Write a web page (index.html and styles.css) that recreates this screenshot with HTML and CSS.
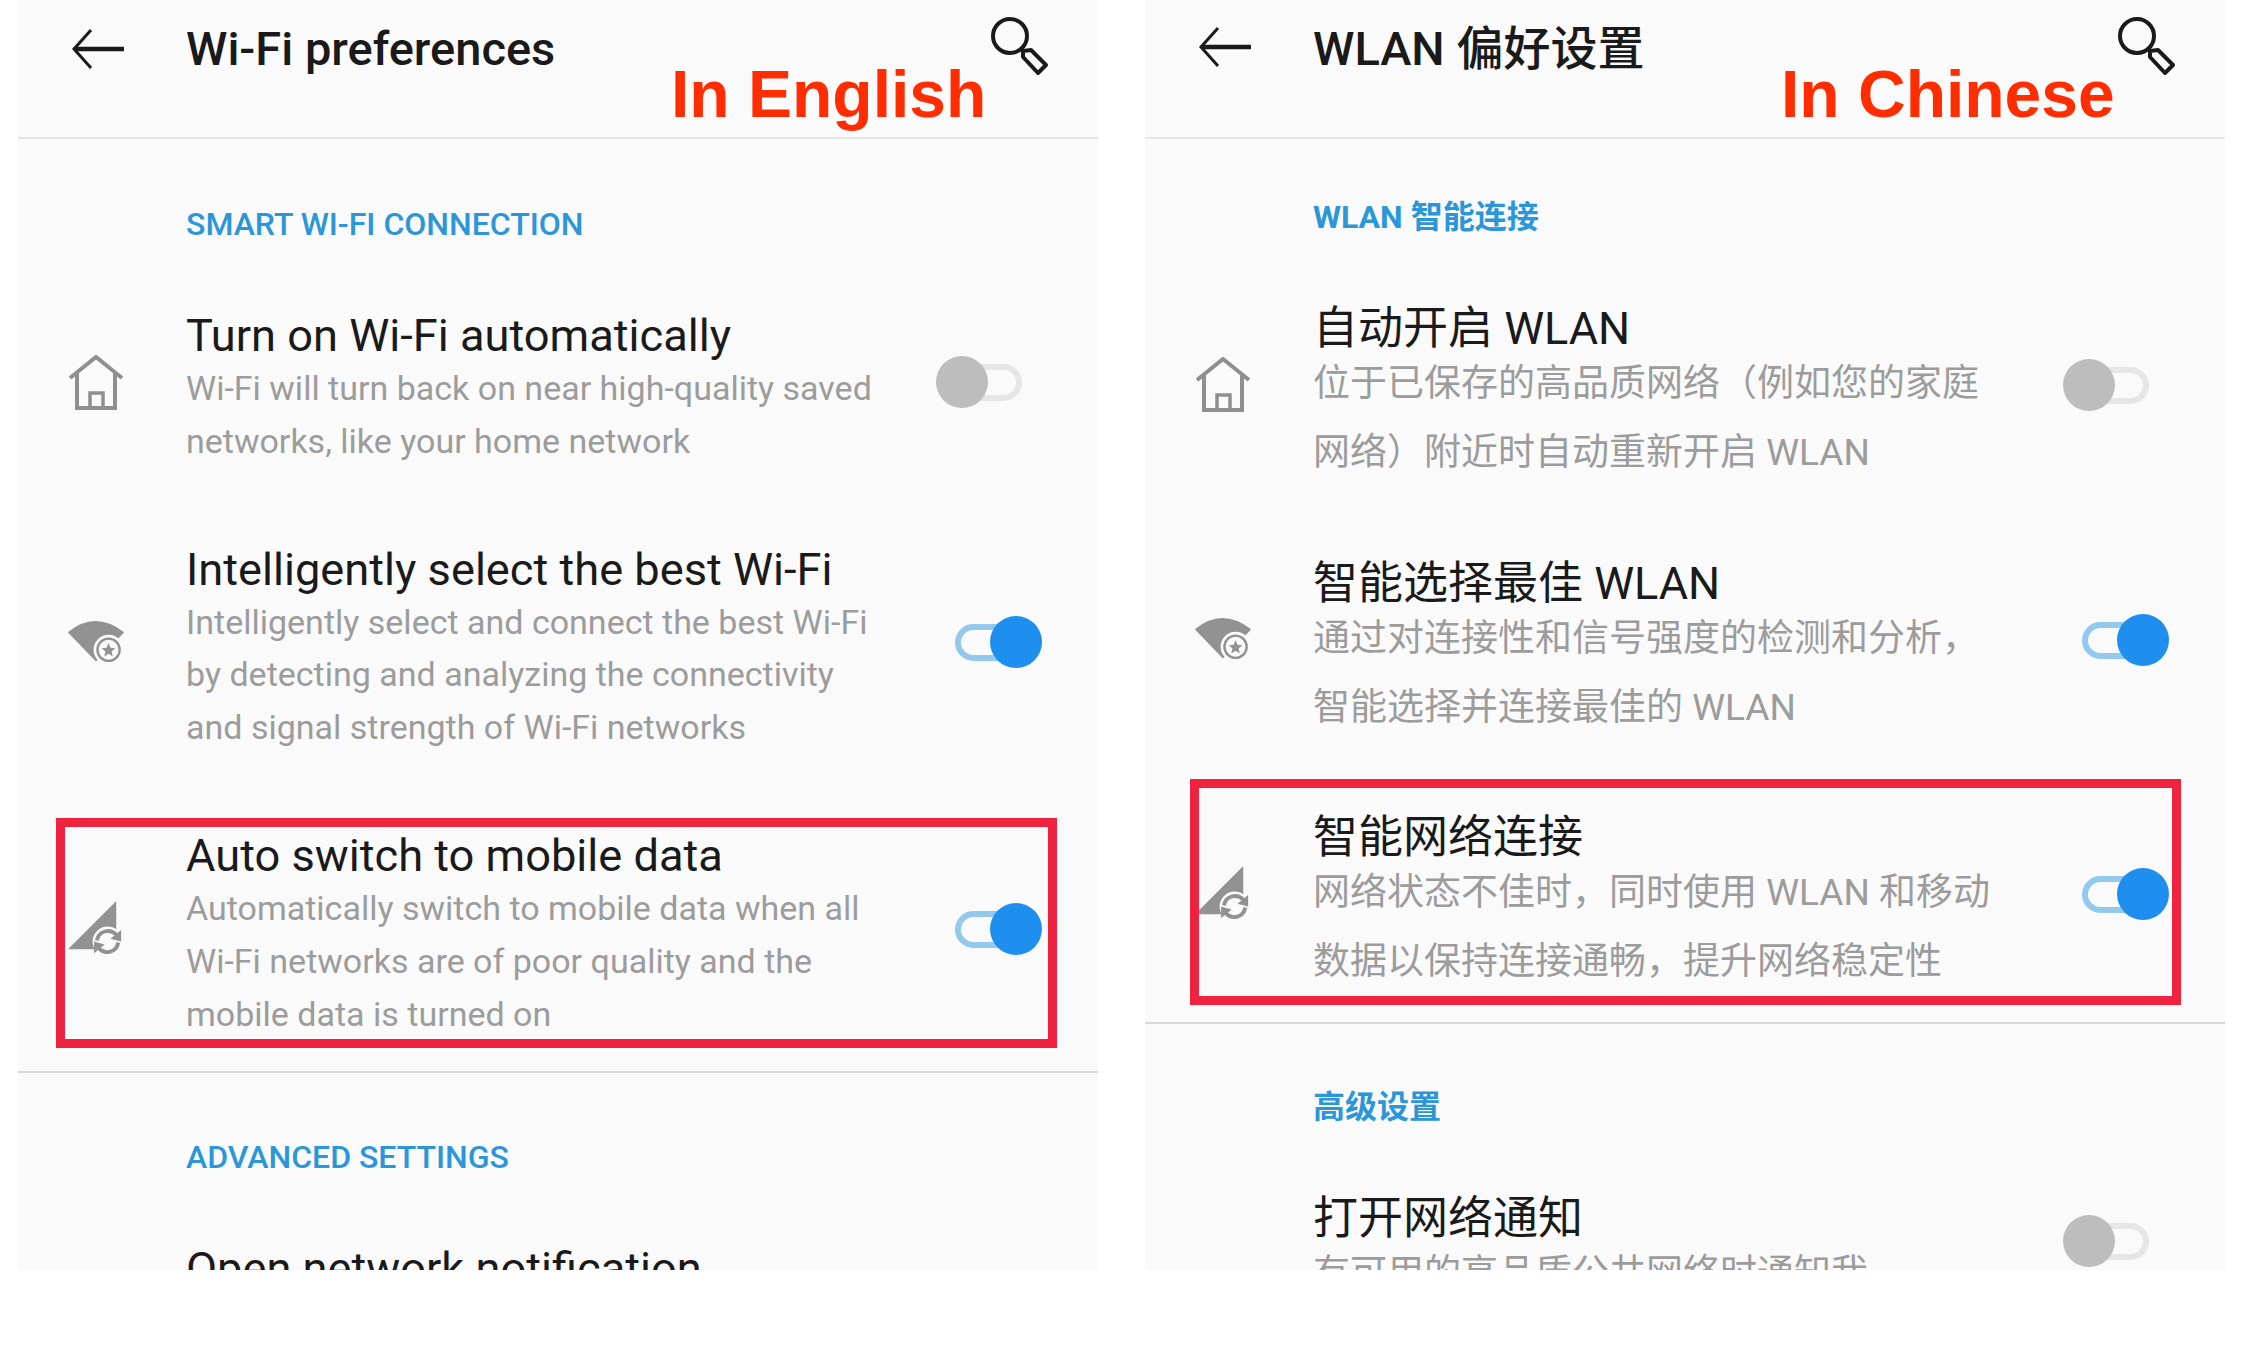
FILE: index.html
```html
<!DOCTYPE html>
<html lang="en">

<head>
    <meta charset="UTF-8">
    <title>Wi-Fi preferences</title>
    <link rel="stylesheet" href="styles.css">
</head>

<body>
    <svg class="sprite" aria-hidden="true">
        <symbol id="icon-back" viewBox="0 0 52 40">
            <path d="M19 1 L2 20 L19 39" fill="none" stroke="#1a1a1a" stroke-width="3" />
            <path d="M3 20 H52" fill="none" stroke="#1a1a1a" stroke-width="4.5" />
        </symbol>
        <symbol id="icon-search" viewBox="0 0 60 60">
            <circle cx="20" cy="20" r="17" fill="none" stroke="#1a1a1a" stroke-width="4" />
            <path d="M33 35 L41 34 L56 49 L48 57 L33 41 Z" fill="none" stroke="#1a1a1a" stroke-width="4" stroke-linejoin="round" />
        </symbol>
        <symbol id="icon-home" viewBox="0 0 56 56">
            <path d="M2 23 L28 2 L54 23" fill="none" stroke="#8f8f8f" stroke-width="4" />
            <path d="M9 18 V53 H47 V18" fill="none" stroke="#8f8f8f" stroke-width="4" />
            <path d="M22 53 V38 H35 V53" fill="none" stroke="#8f8f8f" stroke-width="3.5" />
        </symbol>
        <symbol id="icon-eye" viewBox="0 0 58 46">
            <path d="M1 12 Q28 -10 57 12 L29 41 Z" fill="#929292" stroke="#929292" stroke-width="1.5" stroke-linejoin="round" />
            <circle cx="42" cy="30" r="15.5" fill="#fafafa" />
            <circle cx="42" cy="30" r="11.5" fill="none" stroke="#929292" stroke-width="2.5" />
            <polygon points="42,23 44,28 49,28.500 45.200,31.800 46.400,37 42,34.200 37.600,37 38.800,31.800 35,28.500 40,28" fill="#929292" />
        </symbol>
        <symbol id="icon-signal" viewBox="0 0 58 58">
            <polygon points="50,0 50,50 0,50" fill="#929292" />
            <circle cx="41" cy="42" r="15.500" fill="#fafafa" />
            <path d="M30 41 A11.500 11.500 0 0 1 50 35" fill="none" stroke="#929292" stroke-width="4" />
            <polygon points="55,30 55,42 44,39" fill="#929292" />
            <path d="M52 43 A11.500 11.500 0 0 1 32 49" fill="none" stroke="#929292" stroke-width="4" />
            <polygon points="27,54 27,42 38,45" fill="#929292" />
        </symbol>
    </svg>

    <main class="page">
        <!-- English screen -->
        <section class="panel panel-en">
            <header class="app-bar">
                <svg class="back-icon"><use href="#icon-back" /></svg>
                <h1 class="app-title">Wi-Fi preferences</h1>
                <svg class="search-icon"><use href="#icon-search" /></svg>
            </header>
            <div class="group">
                <h2 class="group-label">SMART WI-FI CONNECTION</h2>
                <div class="rows">
                    <div class="row">
                        <svg class="row-icon"><use href="#icon-home" /></svg>
                        <div class="row-text">
                            <div class="row-title">Turn on Wi-Fi automatically</div>
                            <div class="row-desc">Wi-Fi will turn back on near high-quality saved<br>networks, like your home network</div>
                        </div>
                        <div class="toggle"><span class="track"></span><span class="knob"></span></div>
                    </div>
                    <div class="row">
                        <svg class="row-icon"><use href="#icon-eye" /></svg>
                        <div class="row-text">
                            <div class="row-title">Intelligently select the best Wi-Fi</div>
                            <div class="row-desc">Intelligently select and connect the best Wi-Fi<br>by detecting and analyzing the connectivity<br>and signal strength of Wi-Fi networks</div>
                        </div>
                        <div class="toggle on"><span class="track"></span><span class="knob"></span></div>
                    </div>
                    <div class="row">
                        <svg class="row-icon"><use href="#icon-signal" /></svg>
                        <div class="row-text">
                            <div class="row-title">Auto switch to mobile data</div>
                            <div class="row-desc">Automatically switch to mobile data when all<br>Wi-Fi networks are of poor quality and the<br>mobile data is turned on</div>
                        </div>
                        <div class="toggle on"><span class="track"></span><span class="knob"></span></div>
                    </div>
                </div>
            </div>
            <div class="group group-next">
                <h2 class="group-label">ADVANCED SETTINGS</h2>
                <div class="rows">
                    <div class="row">
                        <div class="row-text">
                            <div class="row-title">Open network notification</div>
                        </div>
                    </div>
                </div>
            </div>
            <div class="annotation">In English</div>
            <div class="highlight"></div>
        </section>

        <!-- Chinese screen -->
        <section class="panel panel-zh" lang="zh-CN">
            <header class="app-bar">
                <svg class="back-icon"><use href="#icon-back" /></svg>
                <h1 class="app-title">WLAN 偏好设置</h1>
                <svg class="search-icon"><use href="#icon-search" /></svg>
            </header>
            <div class="group">
                <h2 class="group-label">WLAN 智能连接</h2>
                <div class="rows">
                    <div class="row">
                        <svg class="row-icon"><use href="#icon-home" /></svg>
                        <div class="row-text">
                            <div class="row-title">自动开启 WLAN</div>
                            <div class="row-desc">位于已保存的高品质网络（例如您的家庭<br>网络）附近时自动重新开启 WLAN</div>
                        </div>
                        <div class="toggle"><span class="track"></span><span class="knob"></span></div>
                    </div>
                    <div class="row">
                        <svg class="row-icon"><use href="#icon-eye" /></svg>
                        <div class="row-text">
                            <div class="row-title">智能选择最佳 WLAN</div>
                            <div class="row-desc">通过对连接性和信号强度的检测和分析，<br>智能选择并连接最佳的 WLAN</div>
                        </div>
                        <div class="toggle on"><span class="track"></span><span class="knob"></span></div>
                    </div>
                    <div class="row">
                        <svg class="row-icon"><use href="#icon-signal" /></svg>
                        <div class="row-text">
                            <div class="row-title">智能网络连接</div>
                            <div class="row-desc">网络状态不佳时，同时使用 WLAN 和移动<br>数据以保持连接通畅，提升网络稳定性</div>
                        </div>
                        <div class="toggle on"><span class="track"></span><span class="knob"></span></div>
                    </div>
                </div>
            </div>
            <div class="group group-next">
                <h2 class="group-label">高级设置</h2>
                <div class="rows">
                    <div class="row">
                        <span class="row-icon"></span>
                        <div class="row-text">
                            <div class="row-title">打开网络通知</div>
                            <div class="row-desc">有可用的高品质公共网络时通知我</div>
                        </div>
                        <div class="toggle"><span class="track"></span><span class="knob"></span></div>
                    </div>
                </div>
            </div>
            <div class="annotation">In Chinese</div>
            <div class="highlight"></div>
        </section>
    </main>
</body>

</html>
```

FILE: styles.css
```css
/* General Styles */
body {
    margin: 0;
    background-color: #FFFFFF;
    font-family: Roboto, "Noto Sans CJK SC", sans-serif;
}

.sprite {
    display: block;
    width: 0;
    height: 0;
}

.page {
    display: flex;
    gap: 47px;
    padding-left: 18px;
}

/* Panels */
.panel {
    position: relative;
    width: 1080px;
    height: 1270px;
    overflow: hidden;
    background-color: #FAFAFA;
}

/* App bar */
.app-bar {
    position: relative;
    display: flex;
    align-items: center;
    height: 97px;
    padding: 0 0 40px 54px;
    border-bottom: 2px solid #E6E6E6;
}

.back-icon {
    width: 52px;
    height: 40px;
    margin-right: 62px;
}

.app-title {
    margin: 0;
    font-size: 47px;
    font-weight: 500;
    color: #1A1A1A;
}

.search-icon {
    position: absolute;
    top: 16px;
    right: 48px;
    width: 60px;
    height: 60px;
}

/* Groups */
.group {
    padding-top: 65px;
}

.group-next {
    border-top: 2px solid #D9D9D9;
    margin-top: 31px;
    padding-top: 64px;
}

.group-label {
    margin: 0 0 65px 168px;
    font-size: 32px;
    font-weight: 500;
    line-height: 40px;
    color: #2B96D8;
}

.rows {
    display: flex;
    flex-direction: column;
    gap: 75px;
}

.row {
    display: flex;
    align-items: center;
    padding-right: 56px;
}

.row-icon {
    flex: none;
    width: 56px;
    height: 56px;
    margin: 0 62px 11px 50px;
}

.row-text {
    flex: 1;
    white-space: nowrap;
}

.group-next .row-text:first-child {
    margin-left: 168px;
}

.row-title {
    font-size: 45.200px;
    line-height: 53px;
    color: #1A1A1A;
}

.row-desc {
    font-size: 34px;
    line-height: 52.8px;
    color: #9C9C9C;
}

/* Toggle */
.toggle {
    position: relative;
    flex: none;
    width: 106px;
    height: 52px;
    margin-bottom: 12px;
}

.track {
    position: absolute;
    top: 8px;
    left: 19px;
    width: 67px;
    height: 37px;
    box-sizing: border-box;
    border: 6px solid #E6E6E6;
    border-radius: 19px;
}

.knob {
    position: absolute;
    top: 0;
    left: 0;
    width: 52px;
    height: 52px;
    border-radius: 50%;
    background-color: #BDBDBD;
}

.toggle.on .track {
    border-color: #93C9EC;
}

.toggle.on .knob {
    left: auto;
    right: 0;
    background-color: #1E8FEE;
}

/* Overlays */
.annotation {
    position: absolute;
    top: 56px;
    left: 653px;
    font-family: "Liberation Sans", Arial, sans-serif;
    font-size: 66px;
    font-weight: 700;
    line-height: 76px;
    color: #FF2D00;
}

.highlight {
    position: absolute;
    top: 818px;
    left: 38px;
    width: 1001px;
    height: 230px;
    box-sizing: border-box;
    border: 9px solid #EF233F;
}

/* Chinese panel differs in spacing */
.panel-zh .app-bar {
    height: 89px;
    padding-bottom: 48px;
}

.panel-zh .back-icon {
    margin-top: 5px;
}

.panel-zh .group {
    padding-top: 58px;
}

.panel-zh .group-next {
    margin-top: 26px;
    padding-top: 63px;
}

.panel-zh .group-label {
    margin-bottom: 71px;
    font-weight: 700;
}

.panel-zh .rows {
    gap: 75.500px;
}

.panel-zh .row-title {
    font-size: 45px;
    line-height: 41px;
}

.panel-zh .row-desc {
    font-size: 37px;
    line-height: 69px;
}

.panel-zh .row-icon,
.panel-zh .toggle {
    margin-bottom: 25px;
}

.panel-zh .annotation {
    left: 636px;
}

.panel-zh .highlight {
    top: 779px;
    left: 45px;
    width: 991px;
    height: 226px;
}
```
